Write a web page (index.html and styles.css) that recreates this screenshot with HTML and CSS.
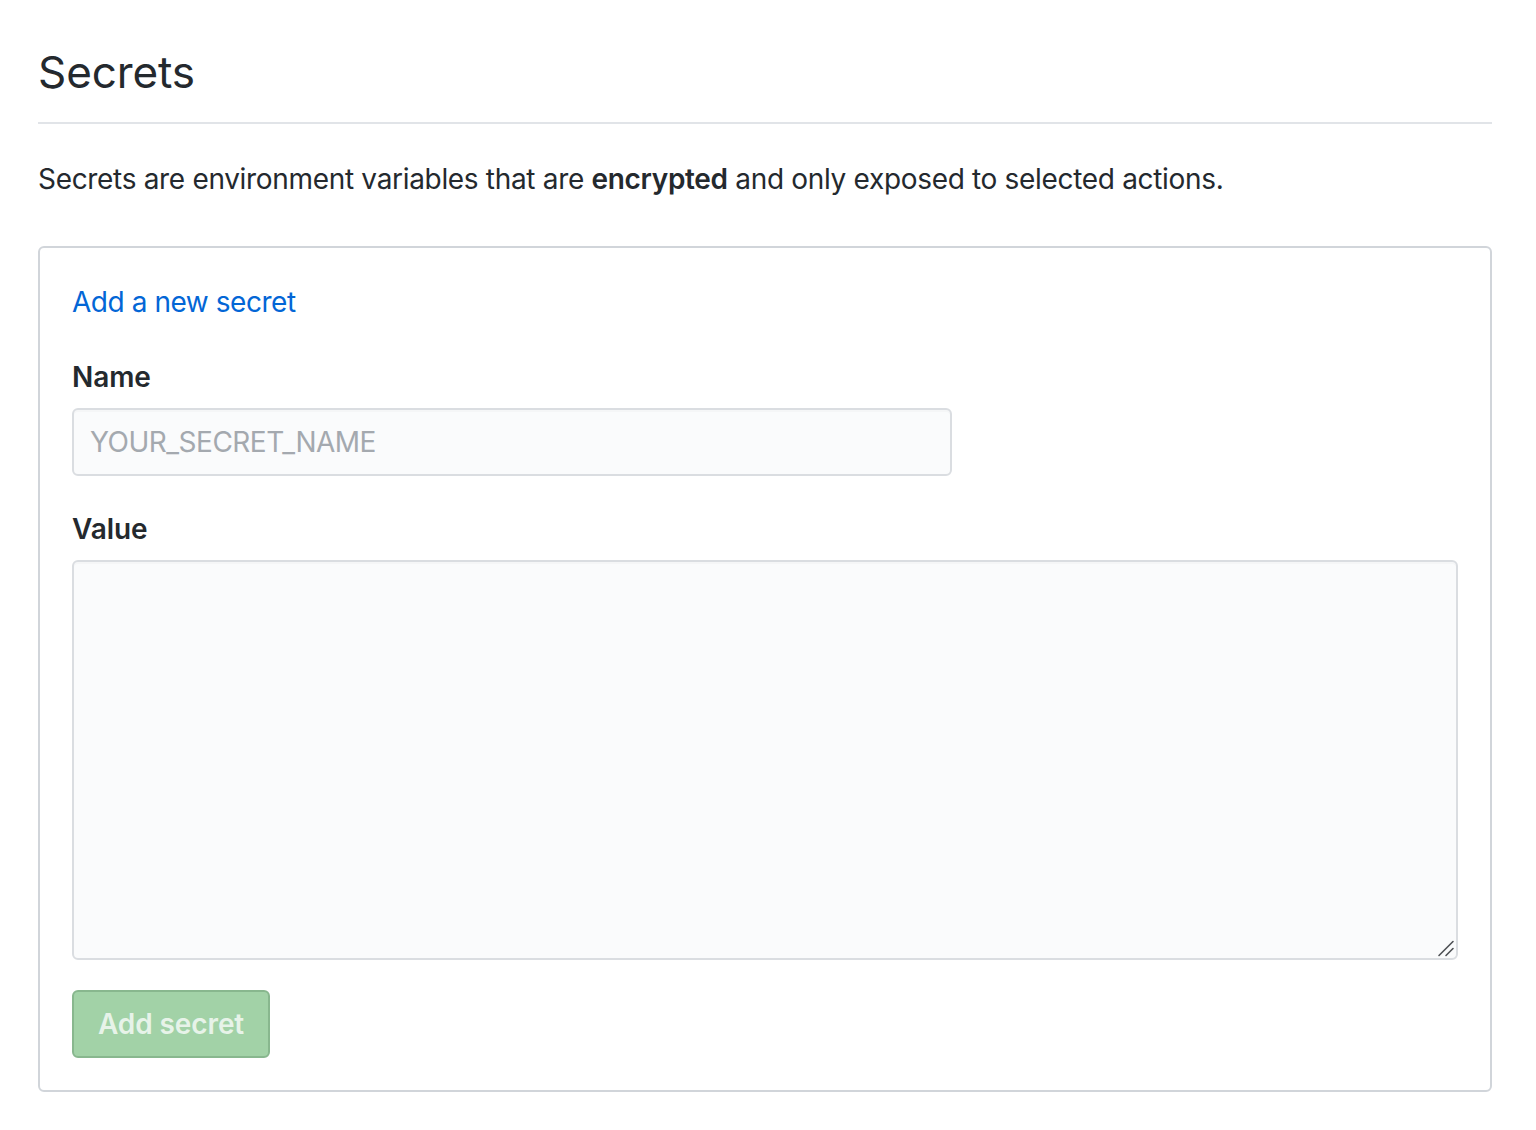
FILE: index.html
```html
<!DOCTYPE html>
<html lang="en">
<head>
<meta charset="utf-8">
<title>Secrets</title>
<link rel="stylesheet" href="styles.css">
</head>
<body>
<main class="page">
  <div class="subhead">
    <h2 class="subhead-title">Secrets</h2>
  </div>
  <p class="intro">Secrets are environment variables that are <strong>encrypted</strong> and only exposed to selected actions.</p>
  <form class="box">
    <a class="box-title" href="#">Add a new secret</a>
    <div class="field">
      <label class="label" for="name">Name</label>
      <input class="input" id="name" type="text" placeholder="YOUR_SECRET_NAME">
    </div>
    <div class="field">
      <label class="label" for="value">Value</label>
      <div class="textarea-wrap">
        <textarea class="textarea" id="value"></textarea>
        <svg class="grip" width="18" height="18" viewBox="0 0 18 18" aria-hidden="true">
          <path d="M2 16.5 L16 2.5 M9 16.5 L16 9.5" stroke="#4f5256" stroke-width="1.6" stroke-linecap="round" fill="none"/>
        </svg>
      </div>
    </div>
    <div class="actions">
      <button class="btn-primary" type="submit" disabled>Add secret</button>
    </div>
  </form>
</main>
</body>
</html>
```
FILE: styles.css
```css
html, body {
  margin: 0;
  padding: 0;
  background: #ffffff;
}
body {
  font-family: Inter, "Liberation Sans", Arial, sans-serif;
  color: #24292e;
}
.page {
  padding: 42px 44px 0 38px;
}
.subhead {
  border-bottom: 2px solid #e1e4e8;
  padding-bottom: 20px;
}
.subhead-title {
  margin: 0;
  font-size: 44px;
  line-height: 60px;
  font-weight: 400;
  letter-spacing: -0.1px;
}
.intro {
  margin: 34px 0 46px;
  font-size: 28px;
  line-height: 42px;
  letter-spacing: -0.32px;
}
.intro strong {
  font-weight: 600;
}
.box {
  display: flex;
  flex-direction: column;
  border: 2px solid #d1d5da;
  border-radius: 6px;
  padding: 33px 32px 32px;
}
.box-title {
  align-self: flex-start;
  font-size: 28px;
  line-height: 42px;
  letter-spacing: -0.45px;
  color: #0366d6;
  text-decoration: none;
}
.field {
  display: flex;
  flex-direction: column;
  gap: 10px;
  margin-top: 33px;
}
.field + .field {
  margin-top: 32px;
}
.label {
  font-size: 28px;
  line-height: 42px;
  font-weight: 600;
  letter-spacing: -0.1px;
}
.input, .textarea {
  box-sizing: border-box;
  font-family: inherit;
  font-size: 28px;
  color: #24292e;
  background: #fafbfc;
  border: 2px solid #dadde1;
  border-radius: 6px;
  box-shadow: inset 0 2px 0 rgba(225, 228, 232, 0.2);
  outline: none;
}
.input {
  width: 880px;
  height: 68px;
  padding: 0 16px;
  letter-spacing: -0.5px;
}
.input::placeholder {
  color: #a4a9af;
}
.textarea-wrap {
  position: relative;
  display: flex;
}
.textarea {
  width: 100%;
  height: 400px;
  padding: 16px;
  resize: none;
}
.grip {
  position: absolute;
  right: 3px;
  bottom: 3px;
  pointer-events: none;
}
.actions {
  margin-top: 30px;
}
.btn-primary {
  font-family: inherit;
  font-size: 28px;
  font-weight: 600;
  line-height: 40px;
  height: 68px;
  padding: 0 24px;
  letter-spacing: -0.1px;
  color: rgba(255, 255, 255, 0.75);
  background: #a2d2a7;
  border: 2px solid #88b78e;
  border-radius: 6px;
}
```
